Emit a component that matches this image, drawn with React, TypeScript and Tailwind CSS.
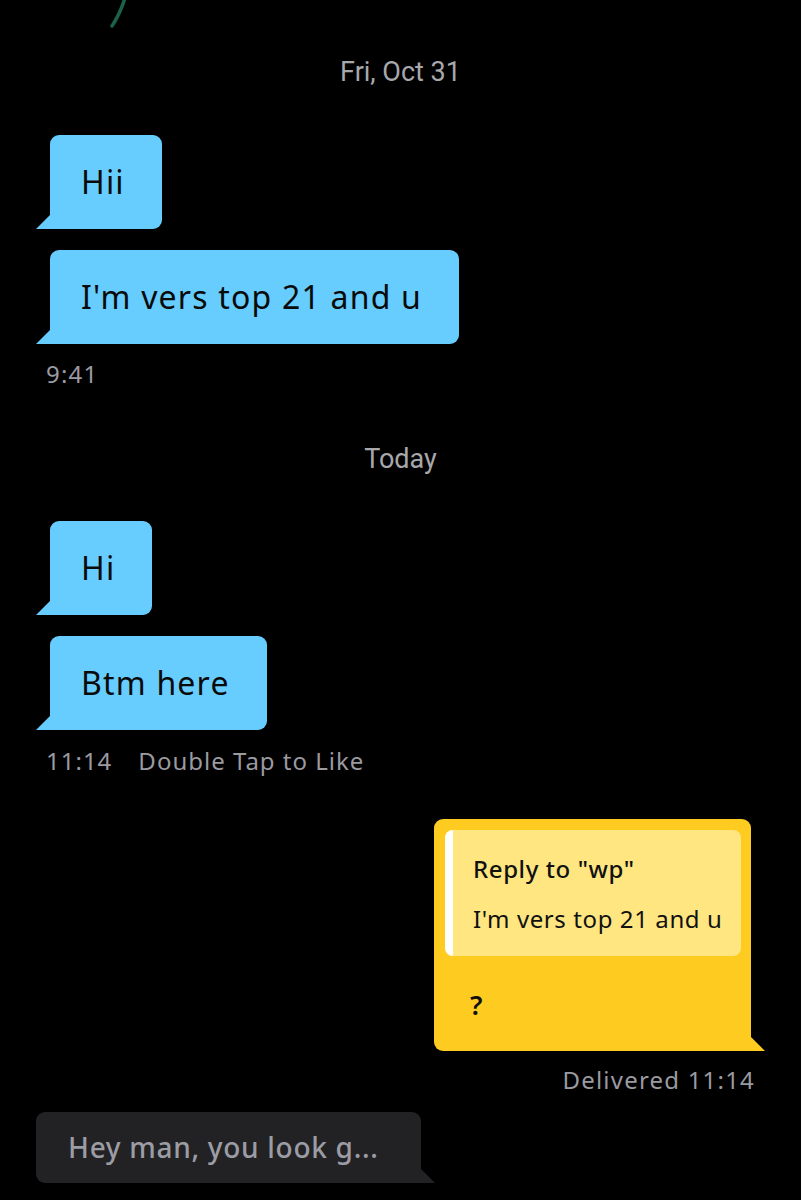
import React from "react";

const plex = "font-['Noto_Sans',sans-serif]";

interface BubbleProps {
  text: string;
}

const InBubble = ({ text }: BubbleProps) => (
  <div className="relative self-start ml-[50px] rounded-[9px] rounded-bl-none bg-[#66cdfe] pl-[31px] pr-[37px] py-[27px]">
    <span className={`${plex} block whitespace-nowrap text-[32px] leading-[40px] tracking-[1.2px] text-[#0a0a0a]`}>{text}</span>
    <div className="absolute bottom-0 -left-[14px] h-[15px] w-[15px] bg-[#66cdfe] [clip-path:polygon(100%_0,100%_100%,0_100%)]" />
  </div>
);

const DayLabel = ({ text }: BubbleProps) => (
  <div className="text-center font-['Roboto',sans-serif] text-[27px] leading-[32px] text-[#a8a8ac]">
    {text}
  </div>
);

export default function App() {
  return (
    <div className="flex min-h-[1200px] w-full flex-col bg-black">
      <svg width="140" height="28" viewBox="0 0 140 28" className="block shrink-0">
        <path d="M125 -2 Q120 14 112 26" stroke="#1a6348" strokeWidth="3.5" fill="none" strokeLinecap="round" />
      </svg>

      <div className="mt-[28px]">
        <DayLabel text="Fri, Oct 31" />
      </div>

      <div className="mt-[47px] flex flex-col gap-[21px]">
        <InBubble text="Hii" />
        <InBubble text="I'm vers top 21 and u" />
      </div>
      <div className={`${plex} ml-[46px] mt-[16px] text-[24px] leading-[28px] tracking-[1.2px] text-[#9a9aa0]`}>9:41</div>

      <div className="mt-[55px]">
        <DayLabel text="Today" />
      </div>

      <div className="mt-[46px] flex flex-col gap-[21px]">
        <InBubble text="Hi" />
        <InBubble text="Btm here" />
      </div>
      <div className={`${plex} ml-[46px] mt-[17px] flex gap-[26px] text-[24px] leading-[28px] tracking-[1px] text-[#9a9aa0]`}>
        <span>11:14</span>
        <span>Double Tap to Like</span>
      </div>

      <div className="relative mt-[44px] mr-[50px] w-[317px] self-end rounded-[9px] rounded-br-none bg-[#fecb21] p-[11px] pr-[10px] pb-[29px]">
        <div className="flex overflow-hidden rounded-[8px] bg-[#ffe681]">
          <div className="w-[8px] shrink-0 bg-white" />
          <div className={`${plex} flex flex-col whitespace-nowrap pl-[20px] pr-[8px] pt-[21px] pb-[19px] tracking-[0.6px] text-[#111]`}>
            <span className="text-[24px] font-medium leading-[36px]">Reply to "wp"</span>
            <span className="mt-[14px] text-[24px] leading-[36px]">I'm vers top 21 and u</span>
          </div>
        </div>
        <div className={`${plex} mt-[32px] pl-[25px] text-[27px] font-semibold leading-[34px] text-[#111]`}>?</div>
        <div className="absolute bottom-0 -right-[14px] h-[15px] w-[15px] bg-[#fecb21] [clip-path:polygon(0_0,100%_100%,0_100%)]" />
      </div>
      <div className={`${plex} mr-[46px] mt-[15px] self-end text-[24px] leading-[28px] tracking-[1.2px] text-[#9a9aa0]`}>
        Delivered 11:14
      </div>

      <div className="relative mt-[18px] ml-[36px] w-[385px] self-start rounded-[9px] rounded-br-none bg-[#222224] px-[32px] py-[18px]">
        <span className={`${plex} block whitespace-nowrap text-[28px] font-medium leading-[35px] tracking-[0.7px] text-[#9c9ca4]`}>
          Hey man, you look g...
        </span>
        <div className="absolute bottom-0 -right-[14px] h-[15px] w-[15px] bg-[#222224] [clip-path:polygon(0_0,100%_100%,0_100%)]" />
      </div>
    </div>
  );
}
